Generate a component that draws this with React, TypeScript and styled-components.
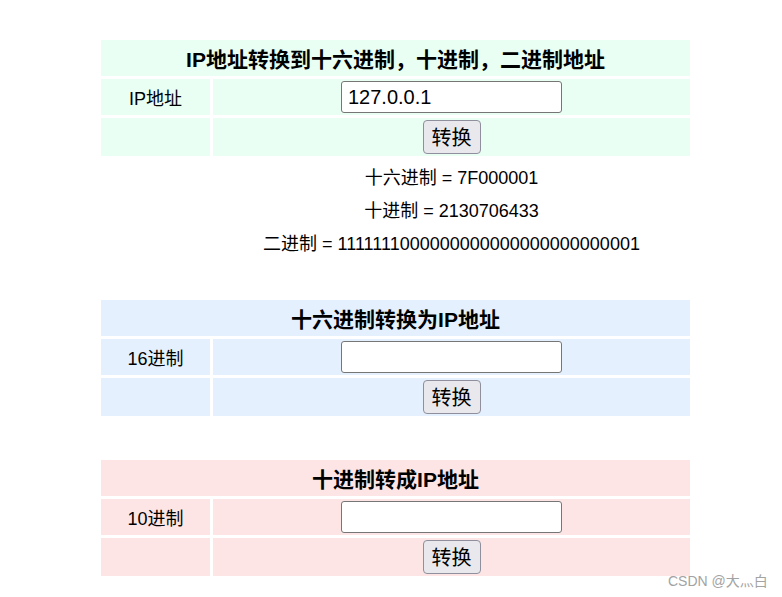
import styled, { createGlobalStyle } from "styled-components";

const GlobalStyle = createGlobalStyle`
  html, body {
    margin: 0;
    padding: 0;
    background: #ffffff;
  }
  body {
    font-family: "Liberation Sans", "Noto Sans CJK SC", Arial, sans-serif;
    color: #000000;
  }
`;

const Page = styled.div`
  position: relative;
  width: 782px;
  height: 597px;
  overflow: hidden;
  padding: 40px 0 0 101px;
  box-sizing: border-box;
`;

const Panel = styled.div<{ $top?: number }>`
  display: grid;
  grid-template-columns: 109px 477px;
  grid-template-rows: 36px 36px 38px;
  gap: 3px;
  width: 589px;
  margin-top: ${(p) => p.$top ?? 0}px;
`;

const Header = styled.div<{ $bg: string }>`
  grid-column: 1 / span 2;
  display: flex;
  align-items: center;
  justify-content: center;
  background-color: ${(p) => p.$bg};
  font-size: 21px;
  font-weight: bold;
`;

const Cell = styled.div<{ $bg: string }>`
  display: flex;
  align-items: center;
  justify-content: center;
  background-color: ${(p) => p.$bg};
  font-size: 18px;
`;

const TextInput = styled.input`
  width: 221px;
  height: 32px;
  box-sizing: border-box;
  border: 1px solid #767676;
  border-radius: 3px;
  padding: 0 6px;
  font-family: "Liberation Sans", Arial, sans-serif;
  font-size: 20px;
  color: #000000;
  background: #ffffff;
  outline: none;
`;

const ConvertButton = styled.button`
  height: 34px;
  padding: 0 8px;
  box-sizing: border-box;
  border: 1px solid #8f8f9d;
  border-radius: 4px;
  background-color: #e9e9ed;
  font-family: "Noto Sans CJK SC", sans-serif;
  font-size: 20px;
  line-height: 1;
  color: #000000;
`;

const Results = styled.div`
  display: grid;
  grid-auto-rows: 33px;
  margin: 3px 0 0 112px;
  width: 477px;
`;

const ResultLine = styled.div`
  display: flex;
  align-items: center;
  justify-content: center;
  font-size: 18px;
  white-space: nowrap;
`;

const Watermark = styled.div`
  position: absolute;
  left: 668px;
  top: 570px;
  font-size: 14px;
  color: #a3a3a3;
  font-family: "Liberation Sans", "Noto Sans CJK SC", sans-serif;
`;

type SectionProps = {
  title: string;
  label: string;
  bg: string;
  value?: string;
  top?: number;
};

const Section = ({ title, label, bg, value, top }: SectionProps) => (
  <Panel $top={top}>
    <Header $bg={bg}>{title}</Header>
    <Cell $bg={bg}>{label}</Cell>
    <Cell $bg={bg}>
      <TextInput defaultValue={value} />
    </Cell>
    <Cell $bg={bg} />
    <Cell $bg={bg}>
      <ConvertButton>转换</ConvertButton>
    </Cell>
  </Panel>
);

export default function App() {
  return (
    <>
      <GlobalStyle />
      <Page>
        <Section
          title="IP地址转换到十六进制，十进制，二进制地址"
          label="IP地址"
          bg="#eafff3"
          value="127.0.0.1"
        />
        <Results>
          <ResultLine>十六进制 = 7F000001</ResultLine>
          <ResultLine>十进制 = 2130706433</ResultLine>
          <ResultLine>二进制 = 1111111000000000000000000000001</ResultLine>
        </Results>
        <Section title="十六进制转换为IP地址" label="16进制" bg="#e4f0fe" top={42} />
        <Section title="十进制转成IP地址" label="10进制" bg="#fde5e5" top={44} />
        <Watermark>CSDN @大灬白</Watermark>
      </Page>
    </>
  );
}
